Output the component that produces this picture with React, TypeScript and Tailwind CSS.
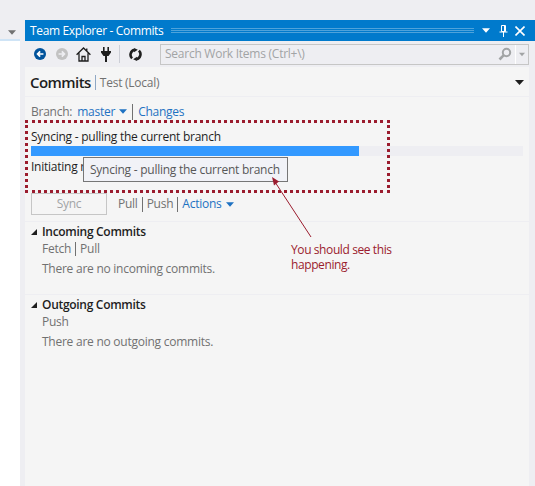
const FONT = 'font-["Open_Sans","Noto_Sans",sans-serif]'

function Caret({ className = '' }: { className?: string }) {
  return (
    <svg width="9" height="5" viewBox="0 0 9 5" className={className} fill="currentColor">
      <path d="M0 0h9L4.5 5z" />
    </svg>
  )
}

function Expander() {
  return (
    <svg width="8" height="8" viewBox="0 0 8 8" className="text-[#1e1e1e]" fill="currentColor">
      <path d="M7 1v6H1z" />
    </svg>
  )
}

function Toolbar() {
  return (
    <div className="flex h-[26px] items-center bg-[#eeeef2] pl-[9px] pr-[6px]">
      <svg width="12" height="12" viewBox="0 0 14 14">
        <circle cx="7" cy="7" r="7" fill="#00539c" />
        <path d="M11 7H4.5M7.200 4 4.200 7l3 3" fill="none" stroke="#fff" strokeWidth="2" />
      </svg>
      <svg width="12" height="12" viewBox="0 0 14 14" className="ml-[10px]">
        <circle cx="7" cy="7" r="7" fill="#c2c2c2" />
        <path d="M3 7h6.500M6.800 4l3 3-3 3" fill="none" stroke="#eeeef2" strokeWidth="2" />
      </svg>
      <svg width="15" height="15" viewBox="0 0 15 15" className="ml-[8px]">
        <path d="M.6 7.800 7.500 1l6.900 6.800M3 6.200V14h9V6.200M6 14V9.500h3V14M10.800 1.500v3" fill="none" stroke="#1e1e1e" strokeWidth="1.300" />
      </svg>
      <svg width="10" height="15" viewBox="0 0 10 15" className="ml-[10px]">
        <path d="M2 0h1.600v4H2zM6.400 0H8v4H6.400zM0 4h10v1.500L7.500 9H6v6H4V9H2.500L0 5.500z" fill="#1e1e1e" />
      </svg>
      <div className="ml-[8px] h-[18px] w-px bg-[#ccced6]" />
      <svg width="13" height="13" viewBox="0 0 14 14" className="ml-[9px]">
        <path d="M3.300 11.200A5.500 5.500 0 0 1 6 1.900M10.700 2.800A5.500 5.500 0 0 1 8 12.100" fill="none" stroke="#1e1e1e" strokeWidth="2.800" />
        <path d="M5.500 0 9.500 2 5.500 4.500zM8.500 14 4.500 12 8.500 9.500z" fill="#1e1e1e" />
      </svg>
      <div className="ml-[18px] flex h-[21px] flex-1 items-center border border-[#c6c6c6] bg-[#eeeef2] pl-[4px]">
        <span className="flex-1 text-[12px] leading-none text-[#a2a4a5]">Search Work Items (Ctrl+\)</span>
        <svg width="14" height="14" viewBox="0 0 14 14">
          <circle cx="8.500" cy="5.500" r="3.700" fill="none" stroke="#a2a4a5" strokeWidth="2" />
          <path d="M5.800 8.200 1.500 12.500" stroke="#a2a4a5" strokeWidth="2.600" />
        </svg>
        <div className="mx-[3px] h-full w-px bg-white" />
        <Caret className="mr-[3px] w-[6px] text-[#a2a4a5]" />
      </div>
    </div>
  )
}

function Section({ title, links, empty }: { title: string; links: string[]; empty: string }) {
  return (
    <div className="h-[73px] border-t border-[#eeeef2] pl-[5px] pt-[1px]">
      <div className="flex h-[18px] items-center gap-[4px] text-[12px] font-semibold text-[#1e1e1e]">
        <Expander />
        <span className="tracking-[-0.3px]">{title}</span>
      </div>
      <div className="ml-[12px] flex h-[15px] items-center text-[12px] text-[#717171]">
        {links.map((l, i) => (
          <span key={l} className="flex items-center">
            {i > 0 && <span className="mx-[4px] h-[14px] w-px bg-[#717171]" />}
            {l}
          </span>
        ))}
      </div>
      <div className="ml-[12px] mt-[4px] h-[18px] text-[12px] leading-[18px] text-[#717171]">{empty}</div>
    </div>
  )
}

export default function App() {
  return (
    <div className={`${FONT} relative h-[486px] w-[535px] overflow-hidden bg-[#eeeef2] tracking-[-0.25px]`}>
      <div className="flex h-full">
        <div className="mt-[25px] flex h-[461px] w-[20px] flex-col">
          <div className="flex h-[14px] items-center justify-end pr-[4px]">
            <Caret className="w-[8px] text-[#717171]" />
          </div>
          <div className="h-[2px] bg-[#cfe4f6]" />
          <div className="flex-1 bg-white" />
        </div>
        <div className="ml-[5px] mt-[20px] flex h-[466px] w-[510px] flex-col">
          <div className="flex h-[21px] items-center bg-[#007acc] pl-[5px] pr-[10px] text-white">
            <span className="text-[12px] leading-none tracking-[-0.35px]">Team Explorer - Commits</span>
            <div className="mx-[8px] h-[6px] flex-1 bg-[linear-gradient(#6fb5e2_1px,transparent_1px)] bg-[length:2px_2px] opacity-70" />
            <Caret className="w-[8px]" />
            <svg width="9" height="12" viewBox="0 0 9 12" className="ml-[9px]" fill="none" stroke="#fff">
              <path d="M2.500.5h4v6h-4zM5.500 1v5.500M.5 7h8M4.500 7v5" />
            </svg>
            <svg width="10" height="10" viewBox="0 0 10 10" className="ml-[7px]" stroke="#fff" strokeWidth="1.600">
              <path d="M.5.5l9 9M9.500.5l-9 9" />
            </svg>
          </div>
          <Toolbar />
          <div className="flex flex-1 flex-col bg-[#f5f5f5] mr-[6px]">
            <div className="flex h-[30px] items-center border-b border-[#eeeef2] pl-[5px] pr-[5px] pt-[2px]">
              <span className="text-[15px] font-semibold tracking-[-0.55px] text-[#1e1e1e]">Commits</span>
              <span className="mx-[4px] h-[15px] w-px bg-[#8fa8c4]" />
              <span className="flex-1 text-[12px] text-[#717171]">Test (Local)</span>
              <Caret className="text-[#1e1e1e]" />
            </div>
            <div className="flex h-[27px] items-center pl-[6px] pt-[2px] text-[12px]">
              <span className="text-[#717171]">Branch:</span>
              <span className="ml-[5px] text-[#1e72c2]">master</span>
              <Caret className="ml-[4px] w-[8px] text-[#1e72c2]" />
              <span className="mx-[5px] h-[16px] w-px bg-[#717171]" />
              <span className="text-[#1e72c2]">Changes</span>
            </div>
            <div className="mt-[4px] h-[18px] pl-[6px] text-[12px] leading-[18px] text-[#1e1e1e]">Syncing - pulling the current branch</div>
            <div className="ml-[6px] mr-[6px] h-[10px] bg-[#eeeef2]">
              <div className="h-full w-[328px] bg-[#3399ff]" />
            </div>
            <div className="mt-[2px] h-[18px] pl-[6px] text-[12px] leading-[18px] text-[#1e1e1e]">Initiating r</div>
            <div className="ml-[6px] mt-[17px] flex h-[22px] items-center text-[12px]">
              <div className="flex h-[22px] w-[76px] items-center justify-center border border-[#c6c6c6] text-[#a2a4a5]">Sync</div>
              <span className="ml-[11px] text-[#717171]">Pull</span>
              <span className="mx-[4px] h-[15px] w-px bg-[#717171]" />
              <span className="text-[#717171]">Push</span>
              <span className="mx-[4px] h-[15px] w-px bg-[#717171]" />
              <span className="text-[#1e72c2]">Actions</span>
              <Caret className="ml-[4px] w-[8px] text-[#1e72c2]" />
            </div>
            <div className="h-[6px]" />
            <Section title="Incoming Commits" links={['Fetch', 'Pull']} empty="There are no incoming commits." />
            <Section title="Outgoing Commits" links={['Push']} empty="There are no outgoing commits." />
          </div>
        </div>
      </div>

      {/* annotation laid over the screenshot */}
      <div className="absolute left-[25px] top-[120px] h-[73px] w-[365px] border-[3px] border-dotted border-[#9b1c2e]" />
      <div className="absolute left-[83px] top-[157px] flex h-[25px] w-[205px] items-center border border-[#767676] bg-[#f1f2f7] pl-[6px] text-[12px] text-[#575757]">
        Syncing - pulling the current branch
      </div>
      <svg className="absolute left-[265px] top-[170px]" width="50" height="70" viewBox="0 0 50 70" fill="none">
        <path d="M46 67 10 12" stroke="#9b1c2e" strokeWidth="1" />
        <path d="M7 7l7 4.500-5 4z" fill="#9b1c2e" />
      </svg>
      <div className="absolute left-[291px] top-[242px] w-[110px] text-[12px] leading-[15px] tracking-[-0.4px] text-[#9b1c2e]">
        You should see this happening.
      </div>
    </div>
  )
}
